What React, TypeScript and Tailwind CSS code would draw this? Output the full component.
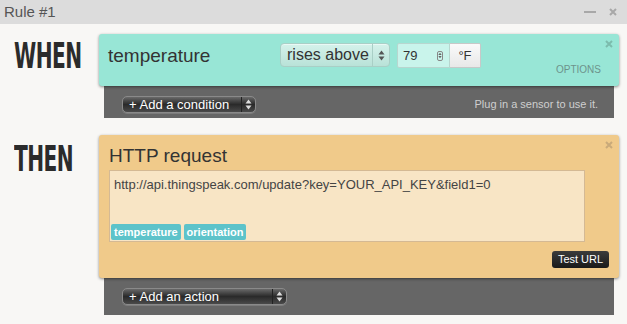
import React from 'react';

const sans = { fontFamily: '"Liberation Sans", Arial, sans-serif' };

function UpDown({ className = '' }: { className?: string }) {
  return (
    <svg width="7" height="11" viewBox="0 0 7 11" className={className}>
      <path d="M3.5 0.5 L6.5 4.5 L0.5 4.5 Z" fill="currentColor" />
      <path d="M3.5 10.5 L6.5 6.5 L0.5 6.5 Z" fill="currentColor" />
    </svg>
  );
}

function DarkSelect({ label, width }: { label: string; width: string }) {
  return (
    <div
      className={`flex h-[17px] ${width} items-stretch overflow-hidden rounded-[5px] border border-[#8a8a8a] bg-gradient-to-b from-[#6a6a6a] via-[#2a2a2a] to-[#4a4a4a] text-[13px] leading-none text-white shadow-[0_1px_0_rgba(255,255,255,0.15)]`}
    >
      <span className="flex flex-1 items-center whitespace-nowrap pl-[6px]">{label}</span>
      <span className="flex w-[14px] items-center justify-center border-l border-[#222] text-[#ddd]">
        <UpDown />
      </span>
    </div>
  );
}

function SectionLabel({ text }: { text: string }) {
  return (
    <div className="w-[99px] shrink-0 pl-[14px]">
      <span
        className="inline-block origin-left scale-x-[0.64] text-[35px] font-bold leading-none tracking-tight text-[#2b2b2b]"
        style={{ fontFamily: '"DejaVu Sans Condensed", "DejaVu Sans", sans-serif' }}
      >
        {text}
      </span>
    </div>
  );
}

function CloseX({ className = '' }: { className?: string }) {
  return (
    <svg width="8" height="8" viewBox="0 0 8 8" className={className}>
      <path d="M1 1 L7 7 M7 1 L1 7" stroke="currentColor" strokeWidth="2" />
    </svg>
  );
}

export default function App() {
  return (
    <div className="h-[324px] w-[627px] overflow-hidden bg-[#f8f7f5]" style={sans}>
      {/* Title bar */}
      <div className="flex h-[24px] items-center justify-between bg-[#dcdcdc] pl-[4px] pr-[10px]">
        <span className="text-[15px] text-[#555]">Rule #1</span>
        <div className="flex items-center gap-[13px] text-[#a8a8a8]">
          <span className="block h-[2px] w-[12px] bg-[#a8a8a8]" />
          <CloseX />
        </div>
      </div>

      {/* WHEN */}
      <div className="mt-[10px] flex">
        <div className="pt-[5px]">
          <SectionLabel text="WHEN" />
        </div>
        <div className="w-[520px]">
          <div className="relative flex h-[52px] items-start rounded-[3px] bg-[#98e6d6] pl-[9px] pt-[9px] shadow-[0_1px_3px_rgba(0,0,0,0.45)]">
            <span className="w-[172px] pt-[2px] text-[19px] leading-[22px] text-[#333]">temperature</span>
            <div className="flex h-[24px] w-[110px] items-stretch overflow-hidden rounded-[4px] border border-[#a9cfc6] bg-gradient-to-b from-[#d5f2eb] to-[#b9e2d8] text-[16px] leading-none text-[#333] shadow-[inset_0_1px_0_rgba(255,255,255,0.5)]">
              <span className="flex flex-1 items-center whitespace-nowrap pl-[6px]">rises above</span>
              <span className="flex w-[17px] shrink-0 items-center justify-center border-l border-[#a9cfc6] text-[#555]">
                <UpDown />
              </span>
            </div>
            <div className="ml-[7px] flex h-[25px] w-[53px] items-center rounded-l-[2px] border border-[#b8d6cf] bg-[#c9f4eb] pl-[5px] pr-[6px] text-[13px] text-[#333]">
              <span className="flex-1">79</span>
              <span className="flex h-[10px] w-[6px] items-center justify-center rounded-[2px] border border-[#888] text-[#666]">
                <UpDown className="h-[7px] w-[4px]" />
              </span>
            </div>
            <div className="flex h-[25px] w-[31px] items-center justify-center rounded-r-[2px] border border-l-0 border-[#c8c8c8] bg-gradient-to-b from-[#fafafa] to-[#e8e8e8] text-[13px] text-[#333]">
              °F
            </div>
            <CloseX className="absolute right-[6px] top-[6px] text-[#7cbcad]" />
            <span className="absolute bottom-[11px] right-[18px] text-[10px] leading-none text-[#6d938b]">OPTIONS</span>
          </div>
          <div className="mx-[5px] flex h-[32px] items-center justify-between bg-[#666] pl-[18px] pr-[16px] pt-[4px]">
            <DarkSelect label="+ Add a condition" width="w-[134px]" />
            <span className="text-[11px] text-[#cfcfcf]">Plug in a sensor to use it.</span>
          </div>
        </div>
      </div>

      {/* THEN */}
      <div className="mt-[17px] flex">
        <div className="pt-[7px]">
          <SectionLabel text="THEN" />
        </div>
        <div className="w-[520px]">
          <div className="relative h-[143px] rounded-[3px] bg-[#f0ca8a] pl-[10px] pr-[10px] pt-[10px] shadow-[0_1px_3px_rgba(0,0,0,0.45)]">
            <div className="text-[19px] leading-[22px] text-[#333]">HTTP request</div>
            <div className="mt-[3px] flex h-[72px] w-[476px] flex-col justify-between border border-[#d4b994] bg-[#f8e5c5] pb-[1px] pl-[1px]">
              <span className="pl-[3px] pt-[6px] text-[13px] leading-[15px] text-[#444]">
                http://api.thingspeak.com/update?key=YOUR_API_KEY&amp;field1=0
              </span>
              <div className="flex gap-[3px]">
                <span className="rounded-[2px] bg-[#5dc3ca] px-[3px] text-[11px] font-bold leading-[16px] text-white">temperature</span>
                <span className="rounded-[2px] bg-[#5dc3ca] px-[3px] text-[11px] font-bold leading-[16px] text-white">orientation</span>
              </div>
            </div>
            <div className="mt-[9px] flex justify-end">
              <span className="flex h-[17px] w-[57px] items-center justify-center rounded-[3px] bg-gradient-to-b from-[#3c3c3c] to-[#1a1a1a] text-[11px] text-white">
                Test URL
              </span>
            </div>
            <CloseX className="absolute right-[6px] top-[6px] text-[#c9aa7a]" />
          </div>
          <div className="mx-[5px] flex h-[37px] items-start bg-[#666] pl-[18px] pt-[10px]">
            <DarkSelect label="+ Add an action" width="w-[165px]" />
          </div>
        </div>
      </div>
    </div>
  );
}
